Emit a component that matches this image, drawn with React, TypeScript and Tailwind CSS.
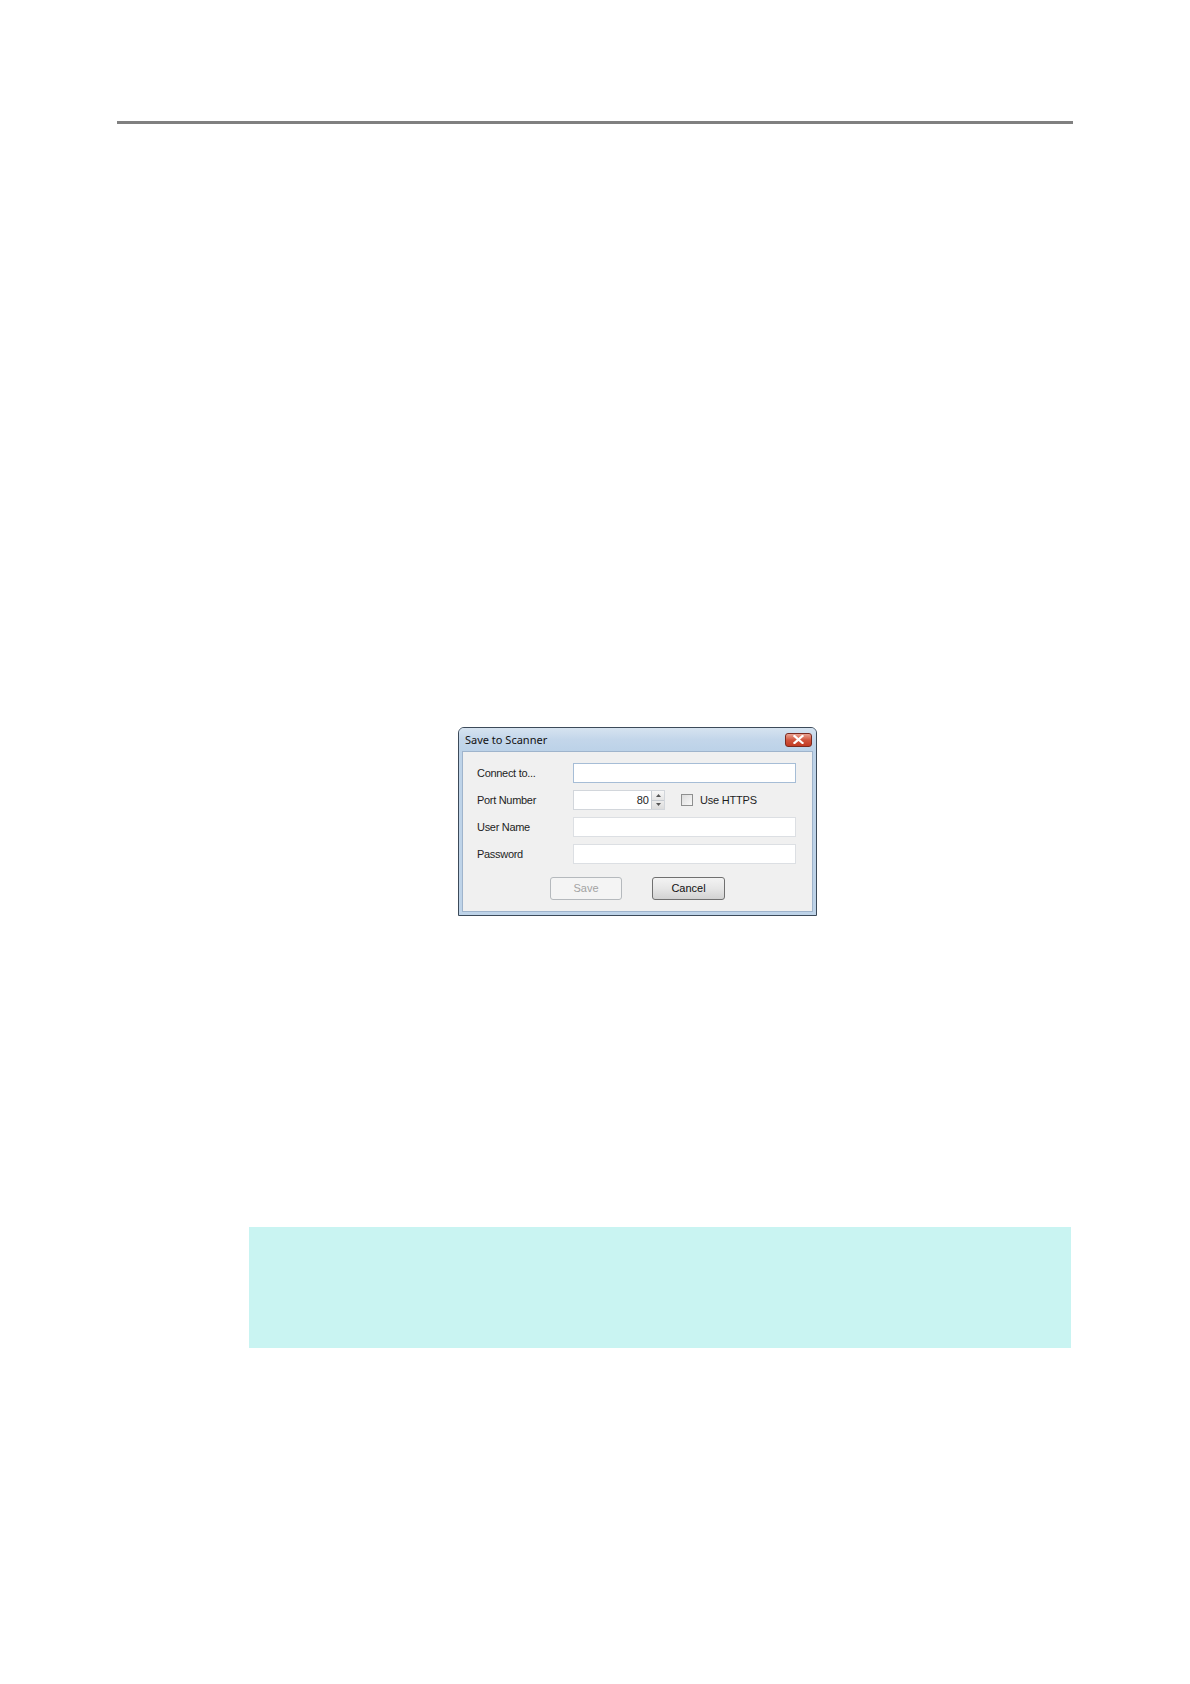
export default function App() {
  const label = "w-[96px] shrink-0 text-[11px] leading-none tracking-[-0.3px] text-[#1e1e1e]";
  const field = "h-[20px] bg-white border border-[#dcdfe3]";

  return (
    <div className="min-h-[1684px] w-[1190px] bg-white font-['Liberation_Sans',Arial,sans-serif]">
      <div className="pt-[121px] pl-[117px]">
        <div className="h-[3px] w-[956px] bg-[#808080]" />
      </div>

      {/* dialog */}
      <div className="ml-[458px] mt-[603px] flex h-[189px] w-[359px] flex-col rounded-t-[6px] border border-[#3c4a59] bg-[#bed3e8]">
        <div className="flex h-[23px] shrink-0 items-center justify-between rounded-t-[5px] bg-gradient-to-b from-[#d6e3f0] via-[#c3d6ea] to-[#bcd2e8] pl-[6px] pr-[4px]">
          <span className="font-['Noto_Sans',sans-serif] text-[11px] leading-none text-[#111]">Save to Scanner</span>
          <div className="flex h-[14px] w-[27px] items-center justify-center rounded-[3px] border border-[#7b2a20] bg-gradient-to-b from-[#e8a393] via-[#d1543d] to-[#c23a22]">
            <svg width="11" height="9" viewBox="0 0 11 9">
              <path d="M1.5 1 L9.5 8 M9.5 1 L1.5 8" stroke="#fff" strokeWidth="2.2" strokeLinecap="square" />
            </svg>
          </div>
        </div>

        <div className="mx-[3px] mb-[3px] flex flex-1 flex-col border border-[#9fb4cc] bg-[#f0f0f0] pl-[14px] pr-[16px] pt-[11px]">
          <div className="flex flex-col gap-[7px]">
            <div className="flex items-center">
              <span className={label}>Connect to...</span>
              <div className="h-[20px] flex-1 border border-[#a6bdd6] bg-white" />
            </div>

            <div className="flex items-center">
              <span className={label}>Port Number</span>
              <div className="flex h-[20px] w-[92px] border border-[#d2d6db] bg-white">
                <span className="flex flex-1 items-center justify-end pr-[2px] text-[11px] leading-none text-[#1e1e1e]">80</span>
                <div className="flex w-[13px] flex-col border-l border-[#c6cbd1]">
                  <div className="flex flex-1 items-center justify-center border-b border-[#c6cbd1] bg-gradient-to-b from-[#f7f7f7] to-[#e4e4e4]">
                    <svg width="5" height="3" viewBox="0 0 5 3"><path d="M0 3 L2.5 0 L5 3 Z" fill="#555" /></svg>
                  </div>
                  <div className="flex flex-1 items-center justify-center bg-gradient-to-b from-[#ececec] to-[#dcdcdc]">
                    <svg width="5" height="3" viewBox="0 0 5 3"><path d="M0 0 L2.5 3 L5 0 Z" fill="#555" /></svg>
                  </div>
                </div>
              </div>
              <div className="ml-[16px] h-[12px] w-[12px] border border-[#8e8f8f] bg-gradient-to-br from-[#dcdcdc] to-[#f8f8f8]" />
              <span className="ml-[7px] text-[11px] leading-none tracking-[-0.2px] text-[#1e1e1e]">Use HTTPS</span>
            </div>

            <div className="flex items-center">
              <span className={label}>User Name</span>
              <div className={`${field} flex-1`} />
            </div>

            <div className="flex items-center">
              <span className={label}>Password</span>
              <div className={`${field} flex-1`} />
            </div>
          </div>

          <div className="mt-[13px] flex pl-[73px] gap-[30px]">
            <div className="flex h-[23px] w-[72px] items-center justify-center rounded-[3px] border border-[#b5b9bd] bg-[#f4f4f4] text-[11px] leading-none text-[#a3a3a3]">
              Save
            </div>
            <div className="flex h-[23px] w-[73px] items-center justify-center rounded-[3px] border border-[#707070] bg-gradient-to-b from-[#f3f3f3] via-[#e6e6e6] to-[#d2d2d2] text-[11px] leading-none text-[#111]">
              Cancel
            </div>
          </div>
        </div>
      </div>

      <div className="ml-[249px] mt-[311px] h-[121px] w-[822px] bg-[#c9f4f2]" />
    </div>
  );
}
